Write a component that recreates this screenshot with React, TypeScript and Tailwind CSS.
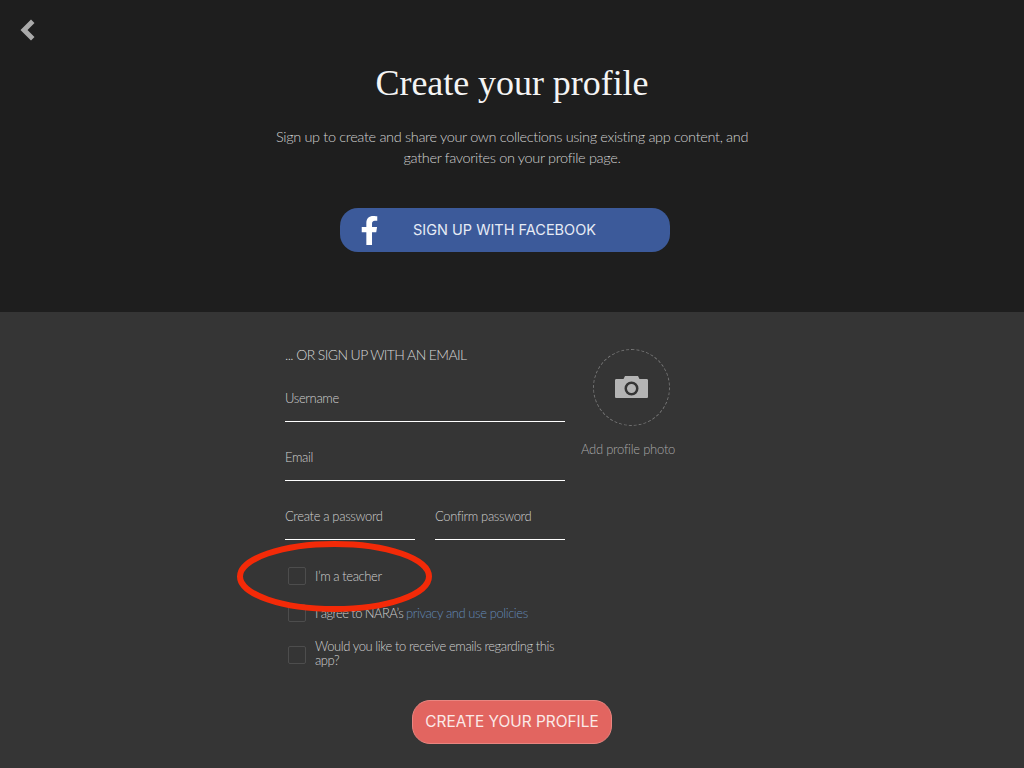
import React from 'react';
import { FaFacebookF } from 'react-icons/fa';

const bodyFont = "font-['Lato','Noto_Sans',sans-serif] font-light";

function Field({ label, className = '' }: { label: string; className?: string }) {
  return (
    <div className={`h-[59px] flex flex-col justify-end ${className}`}>
      <div className="h-[42px] border-b border-white text-[13px] leading-[16px] text-[#cfcfcf] tracking-[-0.35px] pt-[10px]">
        {label}
      </div>
    </div>
  );
}

function CheckRow({ children, className = '', textClass = '' }: { children: React.ReactNode; className?: string; textClass?: string }) {
  return (
    <div className={`flex items-center pl-[3px] ${className}`}>
      <div className="w-[18px] h-[18px] shrink-0 rounded-[2px] border border-[#4d4d4d]" />
      <div className={`ml-[9px] text-[13px] leading-[14px] text-[#cfcfcf] tracking-[-0.42px] ${textClass}`}>{children}</div>
    </div>
  );
}

export default function App() {
  return (
    <div className={`relative w-[1024px] h-[768px] overflow-hidden bg-[#353535] ${bodyFont}`}>
      {/* top part */}
      <div className="relative h-[312px] bg-[#1e1e1e] flex flex-col items-center">
        <button className="absolute left-[20px] top-[19px] text-[#aaaaaa]">
          <svg width="15" height="22" viewBox="0 0 15 22" fill="currentColor">
            <path d="M11 0.5L14.5 4L7.5 11L14.5 18L11 21.5L0.5 11Z" />
          </svg>
        </button>
        <h1 className="mt-[61px] text-[36px] leading-[44px] text-[#f4f4f4] font-['Liberation_Serif',serif] font-normal tracking-[-0.05px]">
          Create your profile
        </h1>
        <p className="mt-[21px] w-[500px] text-center text-[14.5px] leading-[21px] text-[#d0d0d0] tracking-[-0.34px]">
          Sign up to create and share your own collections using existing app content, and
          <br />
          gather favorites on your profile page.
        </p>
        <button className="relative mt-[40px] -ml-[14px] w-[330px] h-[44px] rounded-[18px] bg-[#3c5a9a] text-[#e6ebf5] font-['Inter',sans-serif] font-normal text-[14.5px]">
          <FaFacebookF className="absolute left-[15px] top-[8px] text-white" size={29} />
          <span className="absolute left-[73px] top-[12px] leading-[20px] whitespace-nowrap">SIGN UP WITH FACEBOOK</span>
        </button>
      </div>

      {/* form part */}
      <div className="flex pl-[285px] pt-[35px]">
        <div className="w-[280px]">
          <div className="h-[16px] text-[14px] leading-[16px] text-[#d6d6d6] tracking-[-0.6px]">... OR SIGN UP WITH AN EMAIL</div>
          <Field label="Username" />
          <Field label="Email" />
          <div className="flex gap-[20px]">
            <Field label="Create a password" className="w-[130px]" />
            <Field label="Confirm password" className="w-[130px]" />
          </div>
          <CheckRow className="mt-[27px]">I&rsquo;m a teacher</CheckRow>
          <CheckRow className="mt-[19px]">
            <span className="tracking-[-0.6px]">I agree to NARA&rsquo;s </span>
            <span className="text-[#6389b5]">privacy and use policies</span>
          </CheckRow>
          <CheckRow className="mt-[17px]" textClass="mb-[4px]">Would you like to receive emails regarding this app?</CheckRow>
        </div>
        <div className="ml-[16px] w-[94px] flex flex-col items-center pt-[2px]">
          <div className="w-[77px] h-[77px] rounded-full border border-dashed border-[#777777] flex items-center justify-center ml-[6px]">
            <svg className="mb-[2px]" width="33" height="22" viewBox="0 0 33 22" fill="#b4b4b4">
              <path fillRule="evenodd" d="M1.5 3H8.5L10 0H23L24.5 3H31.5C32.5 3 33 3.5 33 4.5V20.5C33 21.5 32.5 22 31.5 22H1.5C0.5 22 0 21.5 0 20.5V4.5C0 3.5 0.5 3 1.5 3ZM16.5 5.5A7 7 0 1 0 16.5 19.5A7 7 0 1 0 16.5 5.5ZM16.5 8A4.5 4.5 0 1 1 16.5 17A4.5 4.5 0 1 1 16.5 8Z" />
            </svg>
          </div>
          <div className="mt-[15px] text-[13px] leading-[16px] text-[#a8a8a8] tracking-[-0.25px] whitespace-nowrap">Add profile photo</div>
        </div>
      </div>

      <div className="absolute left-[412px] top-[700px]">
        <button className="w-[200px] h-[44px] rounded-[18px] bg-[#e26560] border border-[#e98580] text-[#fbe9e7] font-['Inter',sans-serif] font-normal text-[15.4px]">
          CREATE YOUR PROFILE
        </button>
      </div>

      {/* red annotation */}
      <svg className="absolute left-[230px] top-[535px]" width="210" height="85" viewBox="0 0 210 85" fill="none">
        <ellipse cx="104.5" cy="41.5" rx="94.5" ry="32.5" stroke="#f32a08" strokeWidth="6" />
      </svg>
    </div>
  );
}
